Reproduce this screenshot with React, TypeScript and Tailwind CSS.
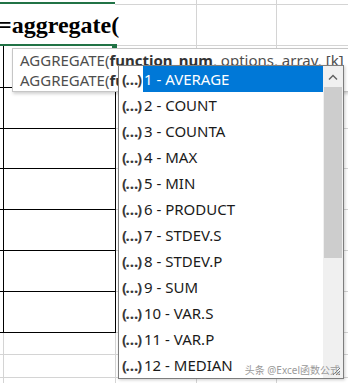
import React from "react";

const items = [
  "1 - AVERAGE",
  "2 - COUNT",
  "3 - COUNTA",
  "4 - MAX",
  "5 - MIN",
  "6 - PRODUCT",
  "7 - STDEV.S",
  "8 - STDEV.P",
  "9 - SUM",
  "10 - VAR.S",
  "11 - VAR.P",
  "12 - MEDIAN",
];

// heights of sheet rows under the formula cell (px, incl. bottom border)
const boxedRows = [42, 41, 40, 41, 41, 41, 41];
const plainRows = [22, 23, 30];

function SheetRow({ h, boxed }: { h: number; boxed: boolean }) {
  const edge = boxed ? "border-black" : "border-[#d4d4d4]";
  return (
    <div className="flex" style={{ height: h }}>
      <div className={`w-[4px] border-r border-b ${edge}`} />
      <div className={`w-[112px] border-r border-b ${edge}`} />
      <div className="w-[81px] border-r border-b border-[#d4d4d4]" />
      <div className="w-[80px] border-r border-b border-[#d4d4d4]" />
      <div className="flex-1 border-b border-[#d4d4d4]" />
    </div>
  );
}

export default function App() {
  return (
    <div className="relative w-[348px] h-[383px] overflow-hidden bg-white">
      {/* formula cell row */}
      <div className="flex h-[46px]">
        <div className="w-[115px] pt-[2px]">
          <div className="h-[44px] border-y-2 border-[#217346] pt-[9px]">
            <div
              className="ml-[-2px] text-[24px] leading-[24px] font-bold text-black whitespace-nowrap"
              style={{ fontFamily: '"Liberation Serif", serif' }}
            >
              =aggregate(
            </div>
          </div>
        </div>
        <div className="w-[82px] h-full border-r border-[#d4d4d4]">
          <div className="mt-[4px] h-[42px] border-y border-[#d4d4d4]" />
        </div>
        <div className="w-[80px] h-full border-r border-[#d4d4d4]">
          <div className="mt-[4px] h-[42px] border-y border-[#d4d4d4]" />
        </div>
        <div className="flex-1 h-full">
          <div className="mt-[4px] h-[42px] border-y border-[#d4d4d4]" />
        </div>
      </div>

      {boxedRows.map((h, i) => (
        <SheetRow key={"b" + i} h={h} boxed />
      ))}
      {plainRows.map((h, i) => (
        <SheetRow key={"p" + i} h={h} boxed={false} />
      ))}

      {/* fill handle */}
      <div className="absolute left-[112px] top-[44px] w-[5px] h-[4px] bg-[#217346]" />

      {/* argument tooltip */}
      <div
        className="absolute left-[12px] top-[48px] w-[360px] h-[44px] border border-[#c6c6c6] bg-white shadow-[1px_2px_3px_rgba(0,0,0,0.18)] px-[7px] pt-[1px] text-[15px] leading-[20px] text-[#4e4e4e] whitespace-nowrap"
        style={{ fontFamily: '"Noto Sans", sans-serif' }}
      >
        <div>
          AGGREGATE(<span className="font-bold text-[#333]">function_num</span>, options, array, [k]
        </div>
        <div>
          AGGREGATE(<span className="font-bold text-[#333]">function_num</span>, options, ref1, ...)
        </div>
      </div>

      {/* autocomplete list */}
      <div
        className="absolute left-[118px] top-[65px] w-[226px] h-[314px] border border-[#7d7d7d] bg-white flex shadow-[1px_1px_3px_rgba(0,0,0,0.2)]"
        style={{ fontFamily: '"Noto Sans", sans-serif' }}
      >
        <div className="flex-1 flex flex-col">
          {items.map((t, i) => (
            <div key={t} className="h-[26px] flex items-center">
              <span className="w-[24px] shrink-0 pl-[3px] text-[15px] font-bold text-[#3a3a3a] tracking-[-1.5px] leading-none whitespace-nowrap">
                (…)
              </span>
              <span
                className={`h-full flex items-center flex-1 pl-[1px] text-[15px] ${
                  i === 0 ? "bg-[#0078d7] text-white" : "text-[#1a1a1a]"
                }`}
              >
                {t}
              </span>
            </div>
          ))}
        </div>
        <div className="w-[20px] bg-[#f0f0f0] flex flex-col">
          <div className="h-[21px] flex items-center justify-center">
            <svg width="10" height="6" viewBox="0 0 10 6">
              <polyline points="1,5.5 5,1.5 9,5.5" fill="none" stroke="#606060" strokeWidth="1.4" />
            </svg>
          </div>
          <div className="mx-[1px] h-[171px] bg-[#cdcdcd]" />
          <div className="flex-1" />
          <div className="h-[14px] flex items-end justify-end pr-[2px] pb-[2px]">
            <svg width="10" height="10" viewBox="0 0 10 10">
              <path d="M9 2 L2 9 M9 5 L5 9 M9 8 L8 9" stroke="#777" strokeWidth="1" />
            </svg>
          </div>
        </div>
      </div>

      {/* watermark */}
      <div
        className="absolute right-[8px] top-[363px] text-[10px] leading-[14px] text-[#9a9a9a] whitespace-nowrap"
        style={{ fontFamily: '"Noto Sans", "Noto Sans CJK SC", sans-serif' }}
      >
        头条 @Excel函数公式
      </div>
    </div>
  );
}
